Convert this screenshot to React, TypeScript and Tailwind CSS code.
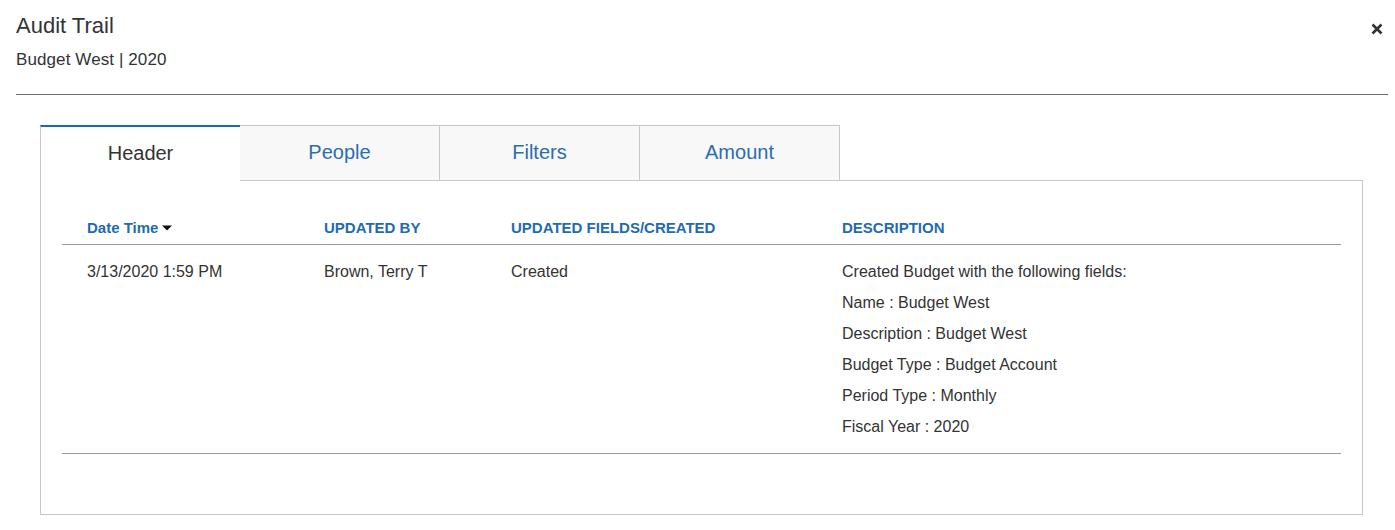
import React from "react";

const font = { fontFamily: '"Liberation Sans", Arial, sans-serif' };

export default function App() {
  const tabs = ["Header", "People", "Filters", "Amount"];
  const desc = [
    "Created Budget with the following fields:",
    "Name : Budget West",
    "Description : Budget West",
    "Budget Type : Budget Account",
    "Period Type : Monthly",
    "Fiscal Year : 2020",
  ];
  return (
    <div className="w-[1395px] h-[530px] bg-white text-[#333] relative" style={font}>
      <div className="px-4 pt-[12px]">
        <div className="text-[22px] leading-[28px] text-[#333]">Audit Trail</div>
        <div className="text-[17px] leading-[20px] mt-[10px] text-[#333] tracking-[0.1px]">Budget West | 2020</div>
        <div className="mt-[24px] h-px bg-[#6b6b6b] w-[1372px]" />
      </div>
      <button className="absolute right-[11px] top-[22px] w-[14px] h-[14px] flex items-center justify-center">
        <svg width="12" height="12" viewBox="0 0 12 12">
          <path d="M1.5 1.5 L10.5 10.5 M10.5 1.5 L1.5 10.5" stroke="#333" strokeWidth="2.6" strokeLinecap="butt" />
        </svg>
      </button>

      <div className="ml-[40px] mt-[30px] w-[1323px]">
        <div className="flex">
          {tabs.map((t, i) =>
            i === 0 ? (
              <div
                key={t}
                className="w-[200px] h-[56px] pb-[3px] bg-white border-t-2 border-t-[#1a6bb5] border-l border-l-[#c8c8c8] flex items-center justify-center text-[20px] text-[#333] relative z-10 -mb-px"
              >
                {t}
              </div>
            ) : (
              <div
                key={t}
                className="w-[200px] h-[55px] pb-[2px] bg-[#f8f8f8] border-t border-r border-[#c8c8c8] flex items-center justify-center text-[20px] text-[#2a6db0]"
              >
                {t}
              </div>
            )
          )}
        </div>
        <div className="border border-[#c8c8c8] h-[335px] px-[21px] pt-[37px]">
          <div className="grid grid-cols-[237px_187px_331px_1fr] border-b border-[#9a9a9a] pb-[6px] leading-[20px]">
            <div className="pl-[25px] text-[15px] font-bold text-[#1f6bb0] flex items-center">
              Date Time
              <svg width="12" height="8" viewBox="0 0 12 8" className="ml-[3px]">
                <path d="M1 1.5 L11 1.5 L6 6.5 Z" fill="#111" />
              </svg>
            </div>
            <div className="pl-[25px] text-[15px] font-bold text-[#1f6bb0] uppercase">Updated By</div>
            <div className="pl-[25px] text-[15px] font-bold text-[#1f6bb0] uppercase">Updated Fields/Created</div>
            <div className="pl-[25px] text-[15px] font-bold text-[#1f6bb0] uppercase">Description</div>
          </div>
          <div className="grid grid-cols-[237px_187px_331px_1fr] border-b border-[#9a9a9a] pt-[11px] pb-[11px] text-[16px] leading-[31px] text-[#333]">
            <div className="pl-[25px]">3/13/2020 1:59 PM</div>
            <div className="pl-[25px]">Brown, Terry T</div>
            <div className="pl-[25px]">Created</div>
            <div className="pl-[25px]">
              {desc.map((d) => (
                <div key={d}>{d}</div>
              ))}
            </div>
          </div>
        </div>
      </div>
    </div>
  );
}
